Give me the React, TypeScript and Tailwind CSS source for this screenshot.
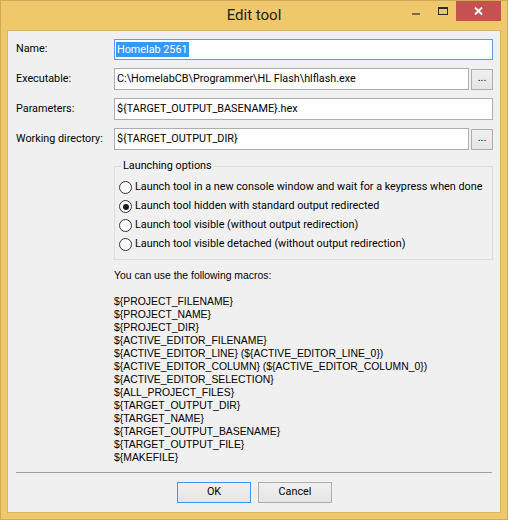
import React from 'react';

const UI = "font-['Roboto',sans-serif] text-[10.8px] text-black";

const macros = [
  '${PROJECT_FILENAME}',
  '${PROJECT_NAME}',
  '${PROJECT_DIR}',
  '${ACTIVE_EDITOR_FILENAME}',
  '${ACTIVE_EDITOR_LINE} (${ACTIVE_EDITOR_LINE_0})',
  '${ACTIVE_EDITOR_COLUMN} (${ACTIVE_EDITOR_COLUMN_0})',
  '${ACTIVE_EDITOR_SELECTION}',
  '${ALL_PROJECT_FILES}',
  '${TARGET_OUTPUT_DIR}',
  '${TARGET_NAME}',
  '${TARGET_OUTPUT_BASENAME}',
  '${TARGET_OUTPUT_FILE}',
  '${MAKEFILE}',
];

const launchOptions = [
  'Launch tool in a new console window and wait for a keypress when done',
  'Launch tool hidden with standard output redirected',
  'Launch tool visible (without output redirection)',
  'Launch tool visible detached (without output redirection)',
];

function TextBox({ value, className = '' }: { value: string; className?: string }) {
  return (
    <div className={`flex items-center bg-white border border-[#ABADB3] pl-[2px] whitespace-nowrap overflow-hidden ${className}`}>
      {value}
    </div>
  );
}

function BrowseButton() {
  return (
    <div className="w-[22px] h-[21px] shrink-0 flex items-center justify-center border border-[#ADADAD] bg-linear-to-b from-[#F0F0F0] to-[#E5E5E5] leading-none pb-[1px]">
      ...
    </div>
  );
}

function Radio({ label, checked }: { label: string; checked?: boolean }) {
  return (
    <div className="h-[19px] flex items-center gap-[3px]">
      <span className="w-[13px] h-[13px] rounded-full border border-[#333333] bg-white flex items-center justify-center shrink-0">
        {checked && <span className="w-[6px] h-[6px] rounded-full bg-[#1A1A1A]" />}
      </span>
      <span className="whitespace-nowrap">{label}</span>
    </div>
  );
}

function DialogButton({ label, isDefault }: { label: string; isDefault?: boolean }) {
  return (
    <div
      className={`w-[74px] h-[21px] flex items-center justify-center border bg-linear-to-b from-[#F0F0F0] to-[#E5E5E5] ${
        isDefault ? 'border-[#3399FF]' : 'border-[#ADADAD]'
      }`}
    >
      {label}
    </div>
  );
}

export default function App() {
  return (
    <div className={`w-[508px] h-[520px] flex flex-col bg-[#EFC86B] border border-[#CDAA55] ${UI}`}>
      {/* title bar */}
      <div className="h-[29px] shrink-0 grid grid-cols-[1fr_auto_1fr]">
        <div />
        <div className="flex items-center pb-[1px] text-[15px] text-[#1E1E1E]">Edit tool</div>
        <div className="flex justify-end items-start pr-[6px]">
          <div className="w-[8px] h-[2px] bg-[#7D6D44] mt-[12px]" />
          <div className="w-[10px] h-[8px] ml-[18px] mt-[6px] border border-t-2 border-[#2B2B2B]" />
          <div className="w-[45px] h-[20px] ml-[8px] bg-[#C75050] flex items-center justify-center">
            <svg width="9" height="8" viewBox="0 0 9 8">
              <path d="M1 0.5 L8 7.5 M8 0.5 L1 7.5" stroke="#FFFFFF" strokeWidth="1.9" />
            </svg>
          </div>
        </div>
      </div>

      {/* client area */}
      <div className="flex-1 mx-[6px] mb-[6px] border border-[#D6B460] bg-[#F0F0F0] flex flex-col pl-[8px] pr-[7px] pt-[8px]">
        <div className="grid grid-cols-[98px_1fr] items-center gap-y-[8px]">
          <span>Name:</span>
          <div className="h-[21px] flex items-center bg-white border border-[#569DE5] pl-[1px]">
            <span className="bg-[#3399FF] text-white px-[1px] leading-[15px]">Homelab 2561</span>
          </div>

          <span>Executable:</span>
          <div className="flex items-center gap-[2px]">
            <TextBox value="C:\HomelabCB\Programmer\HL Flash\hlflash.exe" className="flex-1 h-[22px]" />
            <BrowseButton />
          </div>

          <span>Parameters:</span>
          <TextBox value="${TARGET_OUTPUT_BASENAME}.hex" className="h-[22px]" />

          <span>Working directory:</span>
          <div className="flex items-center gap-[2px]">
            <TextBox value="${TARGET_OUTPUT_DIR}" className="flex-1 h-[22px]" />
            <BrowseButton />
          </div>
        </div>

        <fieldset className="ml-[98px] mt-[8px] border border-[#DCDCDC] p-0">
          <legend className="ml-[6px] px-[2px] leading-[16px]">Launching options</legend>
          <div className="flex flex-col pl-[4px] pt-[4px] pb-[5px]">
            {launchOptions.map((opt, i) => (
              <Radio key={opt} label={opt} checked={i === 1} />
            ))}
          </div>
        </fieldset>

        <div className="ml-[98px] mt-[9px] font-['Liberation_Sans',sans-serif] text-[10.4px] leading-[13px]">
          <div>You can use the following macros:</div>
          <div className="h-[13px]" />
          {macros.map((m) => (
            <div key={m} className="whitespace-nowrap">{m}</div>
          ))}
        </div>

        <div className="mt-[8px] mr-[1px] border-t border-[#A0A0A0]" />

        <div className="mt-[9px] flex justify-center gap-[7px]">
          <DialogButton label="OK" isDefault />
          <DialogButton label="Cancel" />
        </div>
      </div>
    </div>
  );
}
